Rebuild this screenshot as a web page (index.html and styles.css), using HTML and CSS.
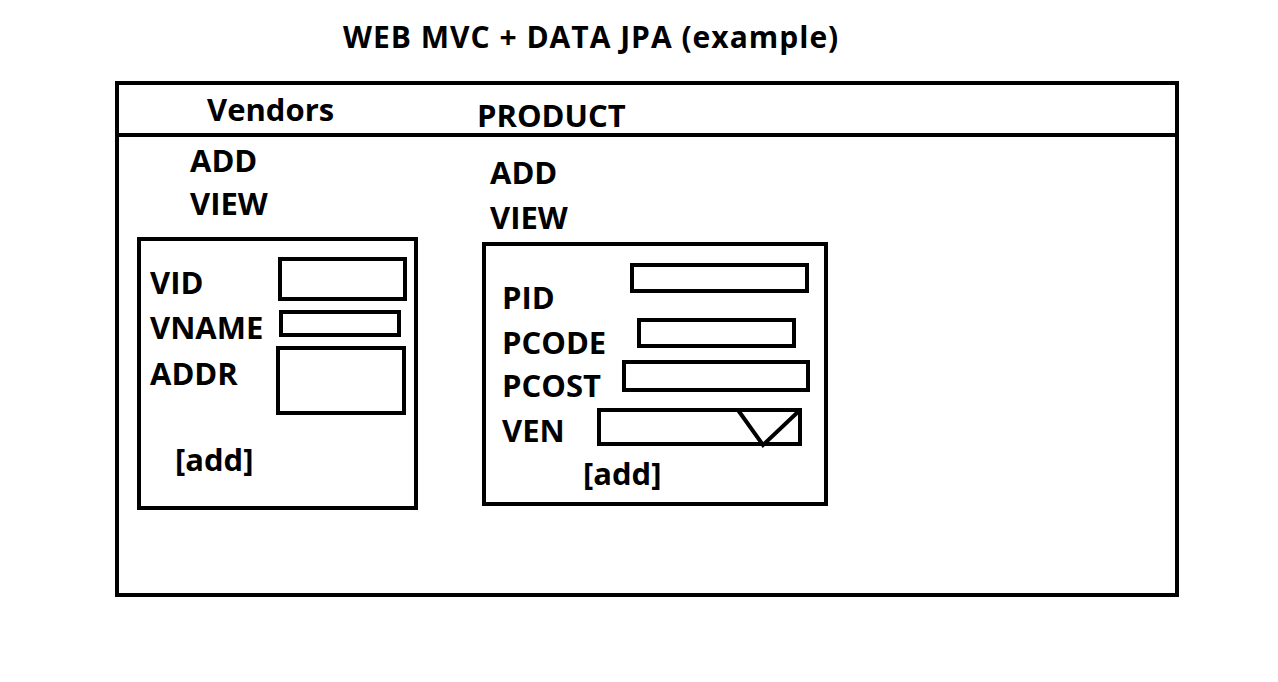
FILE: index.html
```html
<!DOCTYPE html>
<html lang="en">
<head>
    <meta charset="UTF-8">
    <meta name="viewport" content="width=device-width, initial-scale=1.0">
    <title>WEB MVC + DATA JPA (example)</title>
    <link rel="stylesheet" href="styles.css">
</head>
<body>
    <h1 class="title">WEB MVC + DATA JPA (example)</h1>

    <div class="frame">
        <nav class="tabs">
            <a href="#" class="tab tab-vendors">Vendors</a>
            <a href="#" class="tab tab-product">PRODUCT</a>
        </nav>

        <div class="content">
            <section class="column column-vendors">
                <div class="menu">
                    <a href="#">ADD</a>
                    <a href="#">VIEW</a>
                </div>

                <form class="panel panel-vendors">
                    <div class="field vid">
                        <label for="vid">VID</label>
                        <input class="box" id="vid" type="text">
                    </div>
                    <div class="field vname">
                        <label for="vname">VNAME</label>
                        <input class="box" id="vname" type="text">
                    </div>
                    <div class="field addr">
                        <label for="addr">ADDR</label>
                        <textarea class="box" id="addr"></textarea>
                    </div>
                    <button type="button" class="add-button">[add]</button>
                </form>
            </section>

            <section class="column column-product">
                <div class="menu">
                    <a href="#">ADD</a>
                    <a href="#">VIEW</a>
                </div>

                <form class="panel panel-product">
                    <div class="field pid">
                        <label for="pid">PID</label>
                        <input class="box" id="pid" type="text">
                    </div>
                    <div class="field pcode">
                        <label for="pcode">PCODE</label>
                        <input class="box" id="pcode" type="text">
                    </div>
                    <div class="field pcost">
                        <label for="pcost">PCOST</label>
                        <input class="box" id="pcost" type="text">
                    </div>
                    <div class="field ven">
                        <label for="ven">VEN</label>
                        <div class="box select-wrap">
                            <select id="ven"></select>
                            <!-- the hand drawn drop-down arrow -->
                            <svg class="select-arrow" width="205" height="38" viewBox="0 0 205 38">
                                <polyline points="141,2 166,37 203,2" fill="none" stroke="#000" stroke-width="4"/>
                            </svg>
                        </div>
                    </div>
                    <button type="button" class="add-button">[add]</button>
                </form>
            </section>
        </div>
    </div>
</body>
</html>
```

FILE: styles.css
```css
:root {
    --ink: #000000;
    --paper: #FFFFFF;
    --line: 4px solid var(--ink);
}

* {
    margin: 0;
    padding: 0;
    box-sizing: border-box;
}

body {
    background: var(--paper);
    color: var(--ink);
    font-family: 'Open Sans', 'Lato', sans-serif;
    font-weight: 700;
    font-size: 31px;
    line-height: 30px;
}

a {
    color: var(--ink);
    text-decoration: none;
}

.title {
    font-size: 30px;
    line-height: 28px;
    font-weight: 700;
    letter-spacing: 1px;
    margin: 23px 0 0 343px;
}

.frame {
    margin: 30px 0 0 115px;
    width: 1064px;
    height: 516px;
    border: var(--line);
}

/* header strip with the two sections */
.tabs {
    display: flex;
    align-items: flex-start;
    height: 52px;
    border-bottom: var(--line);
}

.tab-vendors {
    width: 270px;
    margin: 9px 0 0 88px;
}

.tab-product {
    margin-top: 15px;
}

.content {
    display: flex;
    align-items: flex-start;
}

.menu a {
    display: block;
}

.column-vendors {
    padding-left: 18px;
}

.column-vendors .menu {
    margin-left: 53px;
    padding-top: 8px;
}

.column-vendors .menu a + a {
    margin-top: 13px;
}

.column-product {
    margin-left: 64px;
}

.column-product .menu {
    margin-left: 8px;
    padding-top: 20px;
}

.column-product .menu a + a {
    margin-top: 15px;
}

.panel {
    border: var(--line);
}

.panel-vendors {
    width: 281px;
    height: 273px;
    margin-top: 19px;
    padding: 16px 0 0 9px;
}

.panel-product {
    width: 346px;
    height: 264px;
    margin-top: 10px;
    padding: 17px 0 0 16px;
}

.field {
    display: flex;
    align-items: flex-start;
}

.field label {
    flex: none;
    display: block;
}

.panel-vendors label {
    width: 126px;
}

.panel-product label {
    width: 95px;
}

.box {
    flex: none;
    border: var(--line);
    border-radius: 0;
    background: var(--paper);
    outline: none;
    resize: none;
    font: inherit;
}

/* vendor form */
.vid label { margin-top: 10px; }
.vid .box { width: 129px; height: 44px; margin-left: 2px; }

.vname label { margin-top: 11px; }
.vname .box { width: 122px; height: 27px; margin: 9px 0 0 3px; }

.addr label { margin-top: 16px; }
.addr .box { width: 130px; height: 69px; margin-top: 4px; }

/* product form */
.pid label { margin-top: 19px; }
.pid .box { width: 179px; height: 30px; margin-left: 33px; }

.pcode label { margin-top: 15px; }
.pcode .box { width: 159px; height: 30px; margin: 6px 0 0 40px; }

.pcost label { margin-top: 13px; }
.pcost .box { width: 188px; height: 32px; margin: 3px 0 0 25px; }

.ven label { margin-top: 15px; }
.ven .box { width: 205px; height: 38px; margin-top: 8px; }

.select-wrap {
    position: relative;
}

.select-wrap select {
    appearance: none;
    width: 100%;
    height: 100%;
    border: none;
    background: transparent;
    outline: none;
}

.select-arrow {
    position: absolute;
    left: -4px;
    top: -4px;
    overflow: visible;
    pointer-events: none;
}

.add-button {
    display: block;
    background: none;
    border: none;
    font: inherit;
    color: var(--ink);
    cursor: pointer;
}

.panel-vendors .add-button {
    margin: 29px 0 0 25px;
}

.panel-product .add-button {
    margin: 12px 0 0 81px;
}
```
